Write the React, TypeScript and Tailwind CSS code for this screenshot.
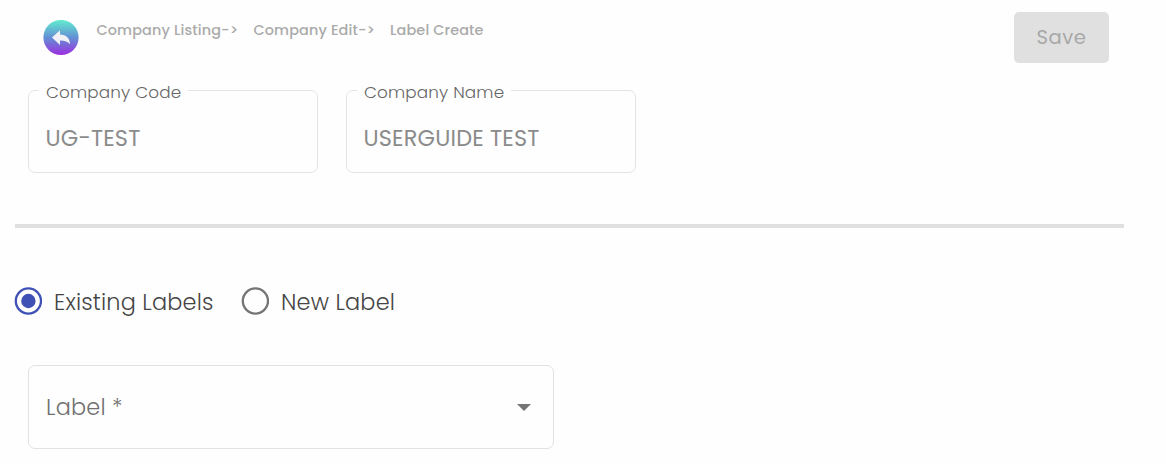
import type { ReactNode } from "react";

function Field({ label, value }: { label: string; value: string }) {
  return (
    <fieldset className="h-[94px] w-[290px] rounded-[7px] border-[1.5px] border-[#e4e4e4] pl-[16.5px]">
      <legend className="-ml-[6.5px] h-[22px] whitespace-nowrap px-[7px] text-[16.8px] font-light leading-[26px] tracking-[0.16px] text-[#666666]">
        {label}
      </legend>
      <div className="mt-[21px] whitespace-nowrap text-[22.4px] leading-[32px] tracking-[0.18px] text-[#8b8b8b]">{value}</div>
    </fieldset>
  );
}

function Radio({ checked, children }: { checked?: boolean; children: ReactNode }) {
  return (
    <label className="flex h-[36px] items-center gap-[12px] tracking-[0.19px]">
      <svg width="28" height="28" viewBox="0 0 28 28" className={checked ? "text-[#3f51b5]" : "text-[#757575]"}>
        <circle cx="14.4" cy="14" r="12.6" fill="none" stroke="currentColor" strokeWidth="2.3" />
        {checked && <circle cx="14.4" cy="14" r="7.2" fill="currentColor" />}
      </svg>
      <span className="pt-px">{children}</span>
    </label>
  );
}

export default function App() {
  return (
    <main className="h-[464px] w-[1166px] overflow-hidden bg-[#fefefe] font-['Poppins','Inter',sans-serif] [font-feature-settings:'cv11']">
      <header className="flex h-[79px] items-start pl-[43px] pr-[57px] pt-[12px]">
        <svg width="36" height="36" viewBox="0 0 36 36" className="mt-[8px]">
          <defs>
            <linearGradient id="back" x1="0" y1="0" x2="0" y2="1">
              <stop offset="0" stopColor="#62edcf" />
              <stop offset=".5" stopColor="#6390d4" />
              <stop offset="1" stopColor="#9d2de0" />
            </linearGradient>
          </defs>
          <circle cx="18" cy="17.5" r="17.6" fill="url(#back)" />
          <path d="M9 17.5 17 10.2v4.3c6.2.2 10 3.6 10 9.8-2.5-3-5.1-4-10-3.9v4.5z" fill="#f1f1f5" />
        </svg>
        <nav className="ml-[17.5px] flex whitespace-nowrap pt-[8px] text-[14.4px] font-medium leading-[21px] tracking-[0.15px] text-[#aaaaaa]">
          <span className="w-[157px]">Company Listing-&gt;</span>
          <span className="w-[136.5px]">Company Edit-&gt;</span>
          <span>Label Create</span>
        </nav>
        <button className="ml-auto h-[51px] w-[95px] rounded-[5px] bg-[#e0e0e0] pt-[1px] text-[19.6px] tracking-[0.56px] text-[#a8a8a8]">
          Save
        </button>
      </header>
      <div className="flex gap-[28px] pl-[28px]">
        <Field label="Company Code" value="UG-TEST" />
        <Field label="Company Name" value="USERGUIDE TEST" />
      </div>
      <hr className="ml-[15px] mt-[51px] h-[4px] w-[1109px] border-0 bg-[#e0e0e0]" />
      <div className="mt-[55px] flex h-[36px] whitespace-nowrap pl-[14px] text-[22.4px] font-light leading-[36px] text-[#454545]">
        <div className="w-[227px]">
          <Radio checked>Existing Labels</Radio>
        </div>
        <Radio>New Label</Radio>
      </div>
      <div className="ml-[28px] mt-[46px] flex h-[84px] w-[526px] items-center justify-between rounded-[7px] border-[1.5px] border-[#e2e2e2] pl-[17px] pr-[22px] text-[22.4px] font-light tracking-[0.21px] text-[#707070]">
        <span className="pt-[2px]">Label *</span>
        <svg width="14" height="7" viewBox="0 0 14 7"><path d="M0 0h14L7 7z" fill="#757575" /></svg>
      </div>
    </main>
  );
}
